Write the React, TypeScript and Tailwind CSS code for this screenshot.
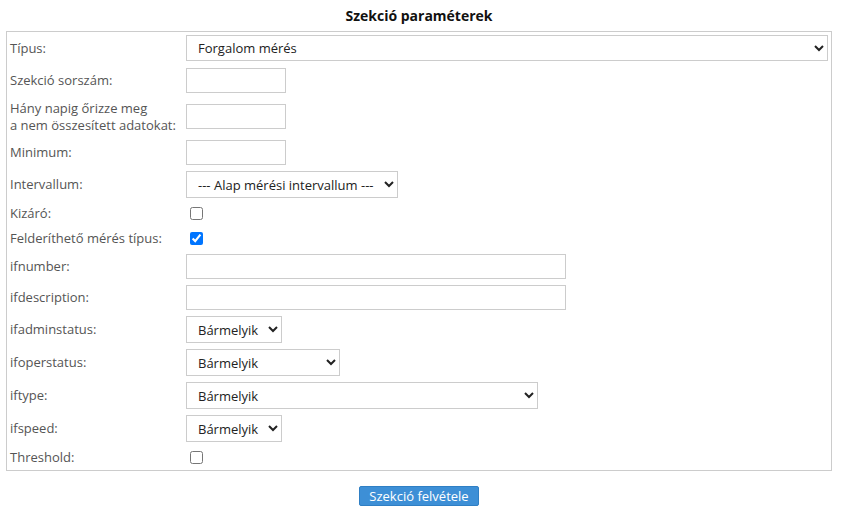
type Row = {
  label: string[];
  h: string;
  control: React.ReactNode;
};

const inputCls = "h-[25px] border border-[#ccc] bg-white px-2 text-[13px] text-[#222] outline-none";
const selectCls = "border border-[#ccc] bg-white pl-[7px] pr-1 text-[13px] text-[#222] outline-none";

function Select({ w, h, value }: { w: string; h: string; value: string }) {
  return (
    <select className={`${selectCls} ${w} ${h}`} defaultValue={value}>
      <option>{value}</option>
    </select>
  );
}

export default function App() {
  const rows: Row[] = [
    { label: ["Típus:"], h: "h-[32px]", control: <Select w="w-[642px]" h="h-[26px]" value="Forgalom mérés" /> },
    { label: ["Szekció sorszám:"], h: "h-[32px]", control: <input className={`${inputCls} w-[100px]`} /> },
    {
      label: ["Hány napig őrizze meg", "a nem összesített adatokat:"],
      h: "h-[41px]",
      control: <input className={`${inputCls} w-[100px]`} />,
    },
    { label: ["Minimum:"], h: "h-[31px]", control: <input className={`${inputCls} w-[100px]`} /> },
    {
      label: ["Intervallum:"],
      h: "h-[33px]",
      control: <Select w="w-[212px]" h="h-[27px]" value="--- Alap mérési intervallum ---" />,
    },
    { label: ["Kizáró:"], h: "h-[25px]", control: <input type="checkbox" className="ml-[4px] h-[13px] w-[13px]" /> },
    {
      label: ["Felderíthető mérés típus:"],
      h: "h-[25px]",
      control: <input type="checkbox" defaultChecked className="ml-[4px] h-[13px] w-[13px]" />,
    },
    { label: ["ifnumber:"], h: "h-[31px]", control: <input className={`${inputCls} w-[380px]`} /> },
    { label: ["ifdescription:"], h: "h-[31px]", control: <input className={`${inputCls} w-[380px]`} /> },
    { label: ["ifadminstatus:"], h: "h-[33px]", control: <Select w="w-[96px]" h="h-[27px]" value="Bármelyik" /> },
    { label: ["ifoperstatus:"], h: "h-[33px]", control: <Select w="w-[154px]" h="h-[27px]" value="Bármelyik" /> },
    { label: ["iftype:"], h: "h-[33px]", control: <Select w="w-[352px]" h="h-[27px]" value="Bármelyik" /> },
    { label: ["ifspeed:"], h: "h-[33px]", control: <Select w="w-[96px]" h="h-[27px]" value="Bármelyik" /> },
    { label: ["Threshold:"], h: "h-[25px]", control: <input type="checkbox" className="ml-[4px] h-[13px] w-[13px]" /> },
  ];

  return (
    <div className="h-[516px] w-[854px] bg-white font-['Open_Sans',sans-serif] text-[13px]">
      <div className="flex h-[31px] items-center justify-center pb-[1px] pl-[6px] pr-[22px] text-[14px] font-bold text-[#111]">
        Szekció paraméterek
      </div>
      <div className="ml-[6px] w-[826px] border border-[#ccc]">
        {rows.map((r, i) => (
          <div key={i} className={`flex items-center ${r.h}`}>
            <div className="w-[179px] pl-[3px] leading-[17px] text-[#555]">
              {r.label.map((l, j) => (
                <div key={j}>{l}</div>
              ))}
            </div>
            <div className="flex items-center">{r.control}</div>
          </div>
        ))}
      </div>
      <div className="flex justify-center pt-[15px] pr-[16px]">
        <button className="h-[20px] w-[120px] rounded-[2px] border border-[#2f7fc4] bg-[#3d8fd6] text-[13px] leading-[18px] text-white">
          Szekció felvétele
        </button>
      </div>
    </div>
  );
}
